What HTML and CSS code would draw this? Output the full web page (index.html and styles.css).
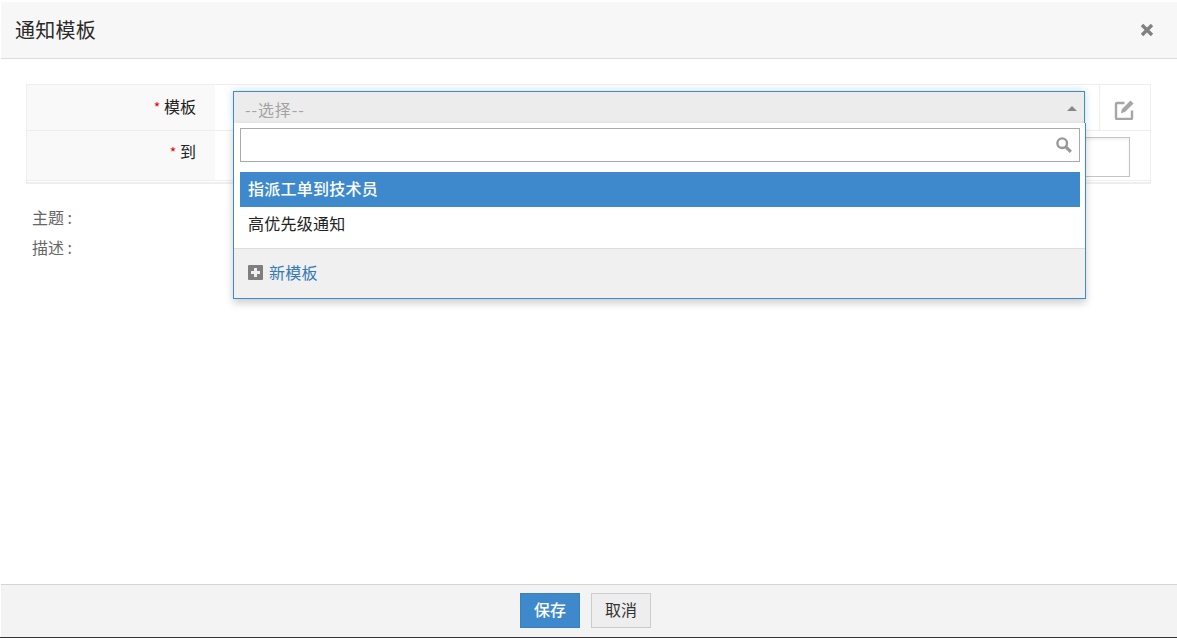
FILE: index.html
```html
<!DOCTYPE html>
<html lang="zh">
<head>
<meta charset="utf-8">
<title>通知模板</title>
<link rel="stylesheet" href="styles.css">
</head>
<body>
<div class="modal">
  <header class="head">
    <h1 class="title">通知模板</h1>
    <svg class="close" width="14" height="14" viewBox="0 0 14 14"><path d="M2 2l10 10M12 2L2 12" stroke="#808080" stroke-width="3.400" fill="none"/></svg>
  </header>
  <main class="body">
    <div class="form">
      <div class="row row-a">
        <div class="label"><span class="star">*</span> 模板</div>
        <div class="cell">
          <div class="select">
            <span class="placeholder">--选择--</span>
            <span class="arrow"></span>
          </div>
          <div class="drop">
            <div class="search">
              <svg width="18" height="18" viewBox="0 0 18 18"><circle cx="7.200" cy="7.200" r="4.800" fill="none" stroke="#999" stroke-width="2.400"/><path d="M10.800 10.800l5 5" stroke="#999" stroke-width="3.200" fill="none"/></svg>
            </div>
            <ul class="list">
              <li class="item active">指派工单到技术员</li>
              <li class="item">高优先级通知</li>
            </ul>
            <div class="drop-foot">
              <svg width="15" height="15" viewBox="0 0 15 15"><rect width="15" height="15" rx="1" fill="#7f7f7f"/><path d="M7.500 3v9M3 7.500h9" stroke="#f0f0f0" stroke-width="3"/></svg>
              <a class="new">新模板</a>
            </div>
          </div>
        </div>
        <div class="tool">
          <svg width="20" height="20" viewBox="0 0 20 20"><path d="M10.500 3H3C2.300 3 2 3.300 2 4v14c0 .7.300 1 1 1h14c.7 0 1-.3 1-1v-7.500" fill="none" stroke="#a6a6a6" stroke-width="2.400"/><path d="M16.500 .5l3 3-8.500 8.500-4.200 1.200L8 9z" fill="#a6a6a6"/></svg>
        </div>
      </div>
      <div class="row row-b">
        <div class="label"><span class="star">*</span> 到</div>
        <div class="cell"><div class="to"></div></div>
      </div>
    </div>
    <div class="meta">
      <div class="meta-line">主题 :</div>
      <div class="meta-line">描述 :</div>
    </div>
  </main>
  <footer class="foot">
    <button class="btn primary">保存</button>
    <button class="btn">取消</button>
  </footer>
</div>
</body>
</html>
```
FILE: styles.css
```css
* { box-sizing: border-box; }
html, body { margin: 0; height: 100%; }
body {
  background: #fff;
  font-family: "Noto Sans CJK SC", "Noto Sans", sans-serif;
  font-size: 16px;
  color: #222;
  overflow: hidden;
}
.modal {
  height: 638px;
  padding: 2px 0 0 1px;
  display: flex;
  flex-direction: column;
  border-bottom: 1px solid #333;
}
.head {
  height: 57px;
  flex: none;
  background: #f7f7f7;
  border-bottom: 1px solid #ddd;
  display: flex;
  align-items: center;
  justify-content: space-between;
  padding: 0 22px 0 14px;
}
.title { margin: 0; font-size: 20px; font-weight: 400; line-height: 56px; color: #2a2a2a; letter-spacing: .25px; }
.close { margin-top: -1px; margin-right: 1px; }
.body { flex: 1; padding: 25px 26px 0 25px; }
.form {
  border: 1px solid #eee;
  box-shadow: inset 0 -3px 0 -2px #eee;
  height: 100px;
}
.row { display: flex; border-bottom: 1px solid #eee; position: relative; }
.row-a { height: 46px; }
.row-b { height: 50px; }
.label {
  width: 188px;
  flex: none;
  background: #f9f9f9;
  text-align: right;
  padding: 9px 19px 0 0;
  line-height: 24px;
  font-size: 16px;
}
.row-b .label { padding-top: 8px; }
.star { color: #e00; font-size: 14px; }
.cell { flex: 1; padding: 6px 21px 0 18px; position: relative; }
.row-a .cell { border-right: 1px solid #eee; padding-right: 14px; }
.row-b .cell { padding-right: 20px; }
.tool { width: 50px; flex: none; display: flex; align-items: center; justify-content: center; padding-top: 5px; padding-right: 2px; }
.select {
  height: 33px;
  background: #ececec;
  border: 1px solid #3d8bcd;
  border-bottom: 0;
  box-shadow: 0 0 8px rgba(61, 139, 205, .3);
  display: flex;
  align-items: center;
  justify-content: space-between;
  padding: 0 7px 0 11px;
  position: relative;
  z-index: 3;
}
.placeholder { color: #a3a3a3; font-size: 16px; line-height: 32px; padding-top: 1px; letter-spacing: .9px; }
.arrow { width: 0; height: 0; border: 5px solid transparent; border-top: 0; border-bottom: 5px solid #888; margin-top: 1px; }
.drop {
  position: absolute;
  left: 18px;
  top: 38px;
  width: 853px;
  height: 176px;
  background: #fff;
  border: 1px solid #3d8bcd;
  border-top: 0;
  box-shadow: 0 4px 8px rgba(0, 0, 0, .2);
  z-index: 4;
  display: flex;
  flex-direction: column;
  padding-top: 5px;
}
.search {
  flex: none;
  height: 34px;
  margin: 0 5px 0 6px;
  border: 1px solid #aaa;
  display: flex;
  align-items: center;
  justify-content: flex-end;
  padding-right: 6px;
}
.list { list-style: none; margin: 10px 5px 0 6px; padding: 0; flex: none; }
.item { height: 35px; line-height: 33px; padding-left: 8px; font-size: 16px; color: #222; letter-spacing: .25px; }
.item.active { background: #3e89cc; color: #fff; font-weight: 500; }
.drop-foot {
  flex: 1;
  margin-top: 6px;
  background: #f0f0f0;
  border-top: 1px solid #ddd;
  display: flex;
  align-items: center;
  gap: 6px;
  padding: 0 0 2px 14px;
}
.new { color: #337ab7; font-size: 16px; line-height: 24px; margin-top: -1px; letter-spacing: .25px; }
.to { height: 40px; background: #fff; border: 1px solid #c4c4c4; box-shadow: inset 0 2px 3px rgba(0, 0, 0, .06); width: 897px; }
.meta { padding: 21px 0 0 6px; color: #666; }
.meta-line { height: 30px; line-height: 24px; font-size: 16px; }
.foot {
  flex: none;
  height: 53px;
  background: #f3f3f3;
  border-top: 1px solid #d4d4d4;
  display: flex;
  justify-content: center;
  align-items: center;
  gap: 11px;
  padding: 0 7px 2px 0;
}
.btn {
  width: 60px;
  height: 35px;
  font: inherit;
  font-size: 16px;
  line-height: 31px;
  background: #eee;
  border: 1px solid #ccc;
  color: #333;
  padding: 0 0 2px;
}
.primary { background: #3e89cc; border-color: #3a80bd; color: #fff; font-weight: 500; }
```
